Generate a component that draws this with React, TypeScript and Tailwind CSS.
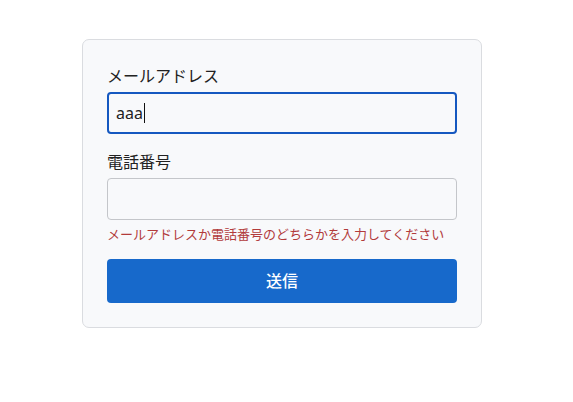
export default function App() {
  return (
    <div className="min-h-[402px] bg-white pt-[39px] pl-[82px] font-['Noto_Sans','Noto_Sans_CJK_JP',sans-serif] text-[#222]">
      <form className="w-[400px] rounded-[7px] border border-[#dadce0] bg-[#f8f9fb] p-6">
        <label className="block text-base leading-6">メールアドレス</label>
        <div className="mt-1 flex h-[42px] items-center rounded-[4px] border-2 border-[#1558c0] bg-[#f8f9fb] px-[7px] text-base">
          <span>aaa</span>
          <span className="ml-px h-[20px] w-px bg-[#111]" />
        </div>

        <label className="mt-4 block text-base leading-6">電話番号</label>
        <div className="mt-1 h-[42px] rounded-[4px] border border-[#c4c6ca] bg-[#f8f9fb]" />
        <p className="mt-1 text-[13px] leading-5 text-[#b23b3b]">
          メールアドレスか電話番号のどちらかを入力してください
        </p>

        <button
          type="button"
          className="mt-[15px] flex h-[44px] w-full items-center justify-center rounded-[4px] bg-[#1769cb] text-base font-medium text-white"
        >
          送信
        </button>
      </form>
    </div>
  )
}
